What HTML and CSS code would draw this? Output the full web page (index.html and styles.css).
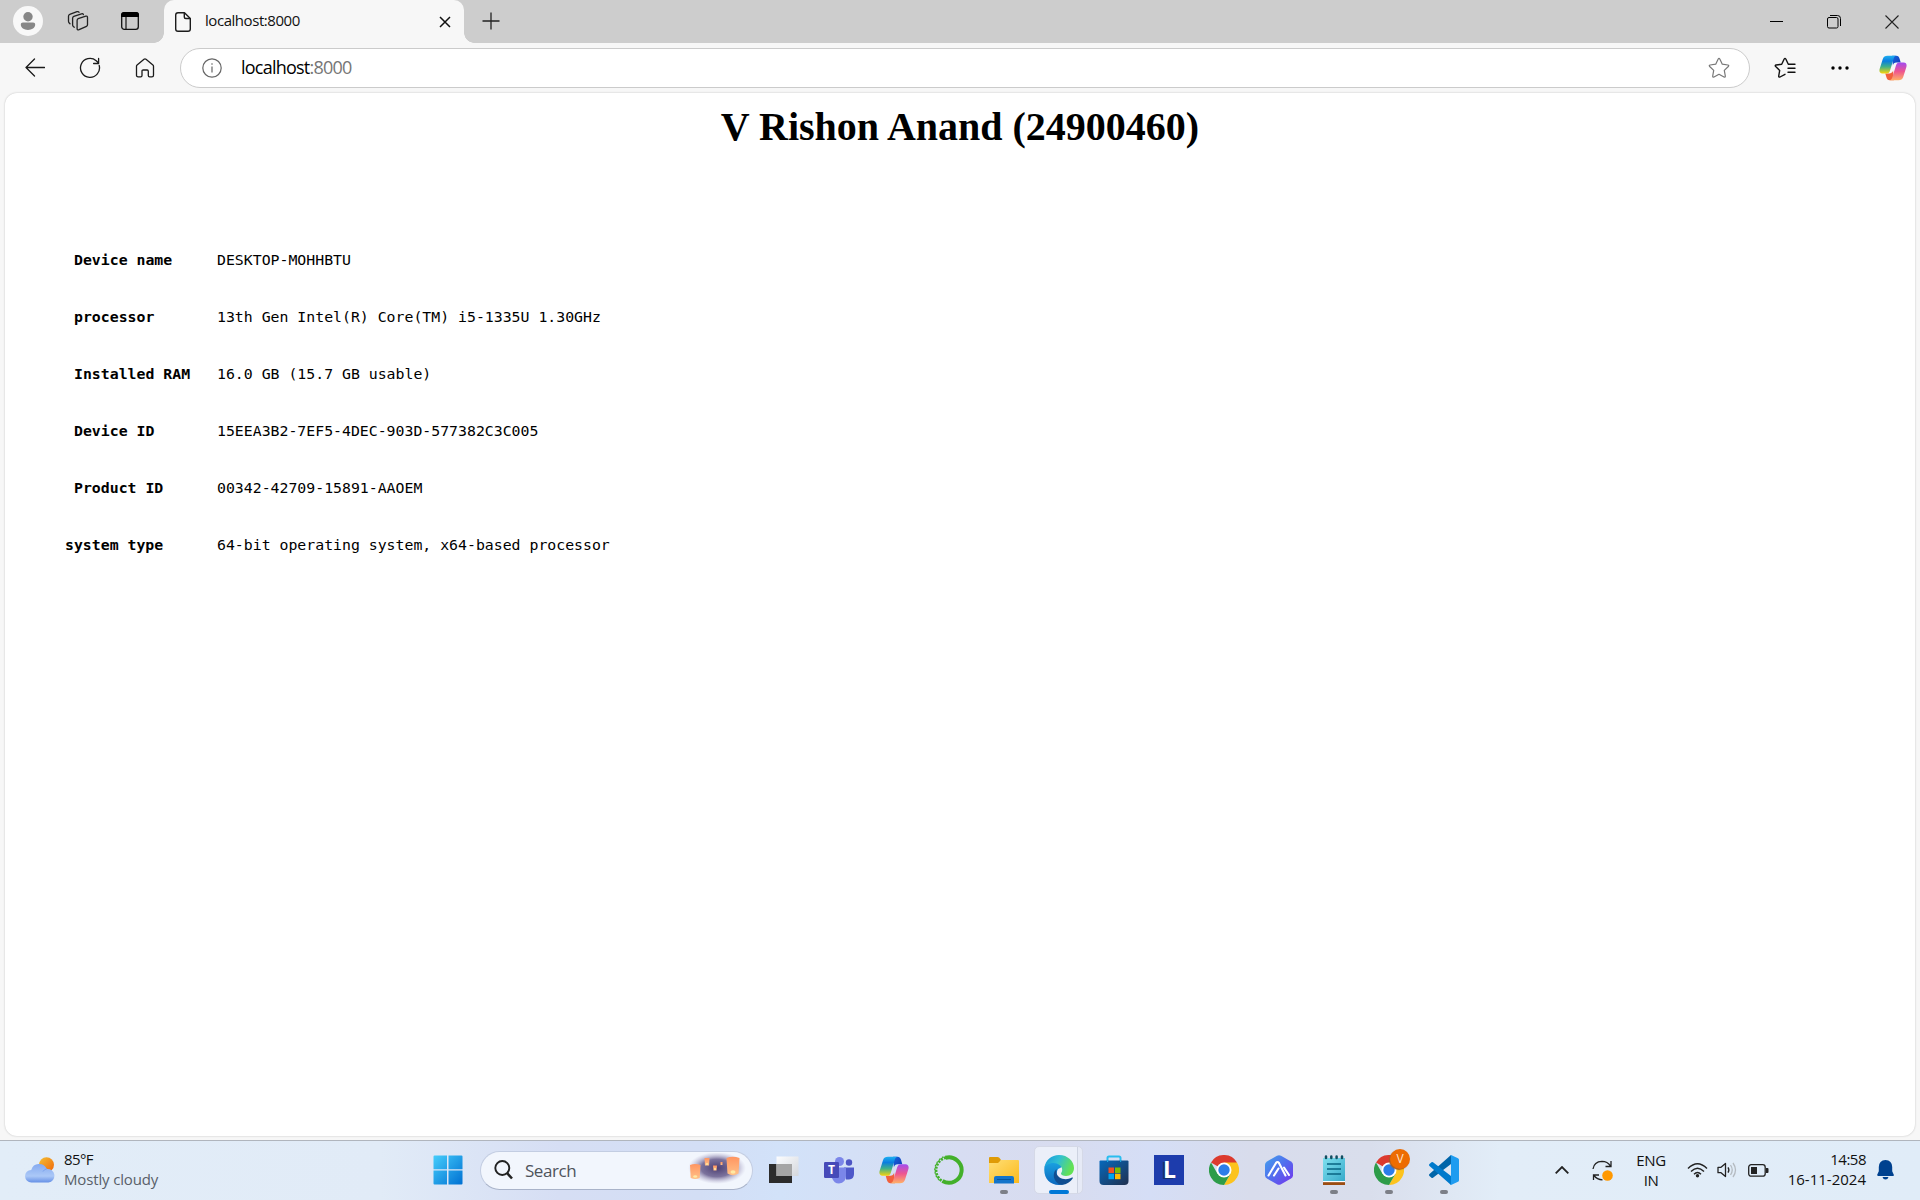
FILE: index.html
```html
<!DOCTYPE html>
<html lang="en">
<head>
<meta charset="utf-8">
<title>localhost:8000</title>
<link rel="stylesheet" href="styles.css">
</head>
<body>
<svg class="defs" width="0" height="0">
  <defs>
    <linearGradient id="cpBlue" x1="0" y1="0" x2="0" y2="1"><stop offset="0" stop-color="#1fb0f0"/><stop offset=".3" stop-color="#0a7de0"/><stop offset=".62" stop-color="#3fb08a"/><stop offset="1" stop-color="#f8d40a"/></linearGradient>
    <linearGradient id="cpPink" x1="0" y1="0" x2="0" y2="1"><stop offset="0" stop-color="#a24bf0"/><stop offset=".5" stop-color="#ee5590"/><stop offset="1" stop-color="#ffb066"/></linearGradient>
    <linearGradient id="cpNavy" x1="0" y1="0" x2="1" y2="1"><stop offset="0" stop-color="#1667dd"/><stop offset="1" stop-color="#1238b8"/></linearGradient>
    <linearGradient id="win" x1="0" y1="0" x2="1" y2="1"><stop offset="0" stop-color="#45cdfb"/><stop offset="1" stop-color="#0070d2"/></linearGradient>
    <linearGradient id="cloud" x1="0" y1="0" x2="0" y2="1"><stop offset="0" stop-color="#85aaf0"/><stop offset=".65" stop-color="#abc8f7"/><stop offset="1" stop-color="#6590e6"/></linearGradient>
    <linearGradient id="sun" x1="0" y1="0" x2="1" y2="1"><stop offset="0" stop-color="#f4c031"/><stop offset="1" stop-color="#f0650b"/></linearGradient>
    <linearGradient id="folder" x1="0" y1="0" x2="1" y2="1"><stop offset="0" stop-color="#ffdf76"/><stop offset="1" stop-color="#fbb91c"/></linearGradient>
    <linearGradient id="edgeTop" x1="0" y1="0" x2="1" y2=".35"><stop offset="0" stop-color="#1595dd"/><stop offset=".5" stop-color="#30bfd3"/><stop offset="1" stop-color="#63e155"/></linearGradient>
    <linearGradient id="edgeLow" x1="0" y1="0" x2="0" y2="1"><stop offset="0" stop-color="#1ba4e3"/><stop offset="1" stop-color="#0b67bd"/></linearGradient>
    <linearGradient id="store" x1="0" y1="0" x2="1" y2="1"><stop offset="0" stop-color="#0669bc"/><stop offset="1" stop-color="#20304f"/></linearGradient>
    <linearGradient id="hexa" x1="0" y1="0" x2="1" y2="1"><stop offset="0" stop-color="#43a3ec"/><stop offset=".5" stop-color="#526cee"/><stop offset="1" stop-color="#7732ed"/></linearGradient>
    <linearGradient id="note" x1="0" y1="0" x2="1" y2="1"><stop offset="0" stop-color="#7fe0ef"/><stop offset="1" stop-color="#37aaca"/></linearGradient>
    <linearGradient id="lamp" x1="0" y1="0" x2="0" y2="1"><stop offset="0" stop-color="#ff9561"/><stop offset="1" stop-color="#ffc188"/></linearGradient>
    <linearGradient id="pane" x1="0" y1="0" x2="1" y2="1"><stop offset="0" stop-color="#fff"/><stop offset="1" stop-color="#d4d6da"/></linearGradient>
    <radialGradient id="night"><stop offset="0" stop-color="#4c3f72"/><stop offset=".55" stop-color="#6e6492" stop-opacity=".9"/><stop offset="1" stop-color="#b7b2d2" stop-opacity="0"/></radialGradient>
    <symbol id="copilot" viewBox="0 0 30 28">
      <path fill="url(#cpNavy)" d="M14 .8h4.500c2.100 0 3 1.400 3.600 3.300l1.200 4.100h-4.800c-2 0-3 1.100-3.600 3z"/>
      <path fill="#f1603c" d="M16 27.200h-4.500c-2.100 0-3-1.400-3.600-3.300l-1.200-4.100h4.800c2 0 3-1.100 3.600-3z"/>
      <path fill="url(#cpBlue)" d="M9 .8h9.700c-2 .2-2.600 1.800-3.100 3.400l-3.700 12.200c-.7 2.300-1.700 3.400-4 3.400H3.500C.8 19.800-.1 17.600.6 15L4 4.200C4.800 1.700 6.500.8 9 .8z"/>
      <path fill="url(#cpPink)" d="M21 27.200h-9.700c2-.2 2.600-1.800 3.100-3.400l3.700-12.200c.7-2.300 1.700-3.400 4-3.400h4.400c2.700 0 3.600 2.200 2.900 4.800L26 23.800c-.8 2.500-2.500 3.400-5 3.400z"/>
    </symbol>
    <symbol id="chrome" viewBox="0 0 30 30">
      <path fill="#dc3a2e" d="M15 15L2 7.500A15 15 0 0 1 28 7.500z"/>
      <path fill="#fcc31e" d="M15 7.500h13A15 15 0 0 1 15 30l6.500-11.300z"/>
      <path fill="#2d9c49" d="M2 7.500A15 15 0 0 0 15 30l6.500-11.200-13 0z"/>
      <circle cx="15" cy="15" r="7.500" fill="#fff"/><circle cx="15" cy="15" r="5.700" fill="#2b7de9"/>
    </symbol>
  </defs>
</svg>

<header class="tabstrip">
  <div class="tab-tools">
    <svg class="avatar" width="30" height="30" viewBox="0 0 30 30"><circle cx="15" cy="15" r="15" fill="#f8f8f8"/><circle cx="15" cy="10.800" r="4.700" fill="#878787"/><path fill="#878787" d="M10 16.500h10c1.500 0 2.200.8 2.200 2.100 0 3.400-3.300 5.400-7.200 5.400s-7.200-2-7.200-5.400c0-1.300.7-2.100 2.200-2.100z"/></svg>
    <svg class="workspaces" width="22" height="22" viewBox="0 0 22 22" fill="none" stroke="#222" stroke-width="1.300" stroke-linejoin="round" stroke-linecap="round"><path d="M11.200 8.600l7.600-2.400q1.700-.4 1.700 1.300v7.300q0 1.100-1 1.500l-7.400 3.400q-2 .7-2-1.300v-8q0-1.400 1.100-1.800z"/><path d="M7.300 17.200l-1-.8q-.7-.5-.7-1.600V8.300q0-1.400 1.200-1.900l7.700-2.600q1.500-.4 1.900.8"/><path d="M3 13.700l-1-1Q1.500 12.200 1.500 11V6.200q0-1.400 1.200-1.800L10 1.700q1.500-.5 2 .6"/></svg>
    <svg class="vertical-tabs" width="20" height="20" viewBox="0 0 20 20"><rect x="1.700" y="1.700" width="16.600" height="16.600" rx="2.600" fill="none" stroke="#111" stroke-width="1.300"/><path d="M1 6V4q0-3 3-3h12q3 0 3 3v2z" fill="#000"/><path d="M6 6v12" stroke="#111" stroke-width="1.200"/></svg>
  </div>
  <div class="tab">
    <svg width="16" height="20" viewBox="0 0 16 20" fill="none" stroke="#1b1b1b" stroke-width="1.400" stroke-linejoin="round"><path d="M3 .7h6.500l5.800 5.700V17q0 2.300-2.300 2.300H3Q.7 19.300.7 17V3Q.7.700 3 .7z"/><path d="M9.300 1v4q0 1.500 1.500 1.500h4.300"/></svg>
    <span class="tab-title">localhost:8000</span>
    <svg class="tab-close" width="12" height="12" viewBox="0 0 12 12" stroke="#111" stroke-width="1.500"><path d="M1 1l10 10M11 1L1 11"/></svg>
  </div>
  <svg class="new-tab" width="18" height="18" viewBox="0 0 18 18" stroke="#222" stroke-width="1.300"><path d="M9 .5v17M.5 9h17"/></svg>
  <div class="window-buttons">
    <svg width="13" height="13" viewBox="0 0 13 13"><path d="M0 6.500h13" stroke="#000"/></svg>
    <svg width="14" height="14" viewBox="0 0 14 14" fill="none" stroke="#000"><rect x=".5" y="2.500" width="10.500" height="10.500" rx="1.500"/><path d="M3 .5h7.500q3 0 3 3V11"/></svg>
    <svg width="14" height="14" viewBox="0 0 14 14" stroke="#222" stroke-width="1.100"><path d="M.5.500l13 13M13.500.500l-13 13"/></svg>
  </div>
</header>

<nav class="toolbar">
  <svg width="20" height="20" viewBox="0 0 20 20" fill="none" stroke="#1b1b1b" stroke-width="1.300" stroke-linecap="round" stroke-linejoin="round"><path d="M19.500 9.500H1M9.500 1L1 9.500 9.500 18"/></svg>
  <svg class="reload" width="22" height="22" viewBox="0 0 22 22" fill="none" stroke="#1b1b1b" stroke-width="1.300" stroke-linecap="round" stroke-linejoin="round"><path d="M20.200 8.500a9.500 9.500 0 1 1-3-4.800L19.600 6M19.600 1.500V6.500h-5"/></svg>
  <svg class="home" width="20" height="20" viewBox="0 0 20 20" fill="none" stroke="#1b1b1b" stroke-width="1.300" stroke-linejoin="round"><path d="M1.500 8.200q0-.8.600-1.300L9 1.200q1-.8 2 0L17.900 6.900q.6.500.6 1.300v9q0 1.600-1.600 1.600h-2.300q-1.300 0-1.300-1.300v-4.300q0-1.200-1.200-1.200H8.200Q7 12 7 13.200v4.300q0 1.300-1.300 1.300H3.100q-1.600 0-1.600-1.600z"/></svg>
  <div class="address">
    <svg width="20" height="20" viewBox="0 0 20 20" fill="none" stroke="#666" stroke-width="1.200"><circle cx="10" cy="10" r="9.200"/><path d="M10 8.500v6M10 5.200v1.600"/></svg>
    <span class="url">localhost<span class="port">:8000</span></span>
    <svg class="star" width="22" height="22" viewBox="0 0 22 22" fill="none" stroke="#777" stroke-width="1.200" stroke-linejoin="round"><path d="M10.200 2q.8-1.300 1.600 0l2.500 5.200 5.500.8q1.600.3.500 1.500l-4 3.900 1 5.600q.1 1.500-1.300 1L11 17.300 6 20q-1.400.5-1.300-1l1-5.600-4-3.900Q.6 8.300 2.200 8l5.500-.8z"/></svg>
  </div>
  <svg class="favorites" width="22" height="22" viewBox="0 0 22 22" fill="none" stroke="#111" stroke-width="1.400" stroke-linejoin="round" stroke-linecap="round"><path d="M11 17.300L6 20q-1.400.5-1.300-1l1-5.600-4-3.900Q.6 8.300 2.200 8l5.500-.8L10.200 2q.8-1.300 1.600 0l2.500 5.200M15 7.300h6M14 11.300h7M14 15.300h7"/></svg>
  <svg class="more" width="18" height="4" viewBox="0 0 18 4"><circle cx="2" cy="2" r="1.700"/><circle cx="9" cy="2" r="1.700"/><circle cx="16" cy="2" r="1.700"/></svg>
  <svg class="sidebar-copilot" width="28" height="26"><use href="#copilot"/></svg>
</nav>

<main class="page">
  <h1>V Rishon Anand (24900460)</h1>
  <dl class="specs">
    <dt>Device name</dt><dd>DESKTOP-MOHHBTU</dd>
    <dt>processor</dt><dd>13th Gen Intel(R) Core(TM) i5-1335U 1.30GHz</dd>
    <dt>Installed RAM</dt><dd>16.0 GB (15.7 GB usable)</dd>
    <dt>Device ID</dt><dd>15EEA3B2-7EF5-4DEC-903D-577382C3C005</dd>
    <dt>Product ID</dt><dd>00342-42709-15891-AAOEM</dd>
    <dt class="flush">system type</dt><dd>64-bit operating system, x64-based processor</dd>
  </dl>
</main>

<footer class="taskbar">
  <div class="weather">
    <svg width="31" height="26" viewBox="0 0 31 26"><circle cx="21.500" cy="7.700" r="7.500" fill="url(#sun)"/><path fill="url(#cloud)" d="M6.500 25.500a6.300 6.300 0 0 1-.3-12.600A8.300 8.300 0 0 1 21.700 12a6.800 6.800 0 1 1 1.800 13.500z"/><path d="M18 14.500q1.500-2.500 4-2.800" stroke="#7ba1e9" fill="none"/></svg>
    <div class="weather-text"><span>85°F</span><span class="muted cloudy">Mostly cloudy</span></div>
  </div>
  <svg class="start" width="30" height="30" viewBox="0 0 30 30"><path fill="url(#win)" d="M1.500.500H14V14.200H.5V1.500q0-1 1-1zM15.500.500h13q1 0 1 1V14.200h-14zM.5 15.500H14v14H1.500q-1 0-1-1zM15.500 15.500h14v13q0 1-1 1h-13z"/></svg>
  <div class="search">
    <svg width="19" height="20" viewBox="0 0 19 20" fill="none" stroke="#222" stroke-width="1.900"><circle cx="8.300" cy="8" r="7"/><path d="M13 13l5 5.500" stroke-width="2.600"/></svg>
    <span>Search</span>
    <svg class="lanterns" width="58" height="32" viewBox="0 0 58 32"><ellipse cx="29" cy="15" rx="29" ry="16" fill="url(#night)"/><g fill="url(#lamp)"><path d="M2 12q5-2 10.500 0l-.8 13q-4.500 2-9 0z"/><path d="M16.500 5h5l-.5 7.500h-4z"/><path d="M25 12.500h4l-.5 5h-3z"/><path d="M32.500 9h2v3h-2z"/><path d="M38.500 5q6-2.500 13 0l-1 15.500q-5.500 3.500-11 0z"/></g><g fill="#ffe9a3"><ellipse cx="7.200" cy="23.500" rx="2" ry="1.300"/><ellipse cx="45" cy="19" rx="2.500" ry="1.700"/><circle cx="19" cy="11" r="1"/><circle cx="27" cy="16" r="1"/></g></svg>
  </div>
  <div class="apps">
    <div class="app"><svg width="30" height="30" viewBox="0 0 30 30"><path d="M0 9h23v19H0z" fill="#2c2c2c"/><path d="M7.500 1.500h22V21h-22z" fill="url(#pane)" opacity=".93"/><path d="M7.500 9H23v12H7.500z" fill="#a5a5a5"/></svg></div>
    <div class="app"><svg width="30" height="30" viewBox="0 0 30 30"><circle cx="25" cy="7.500" r="3.200" fill="#4e55c4"/><path d="M20 12.500h10V19q0 5-5 5.500h-3z" fill="#4e58c9"/><circle cx="15.500" cy="6.500" r="4.500" fill="#7b86e9"/><path d="M8 12.500h14V20q0 8-7 8.500-5 0-7-5.500z" fill="#7b86e9"/><rect y="7" width="15" height="16" rx="1.200" fill="#464ab9"/><text class="teams-letter" x="7.500" y="19.200" text-anchor="middle" fill="#fff">T</text></svg></div>
    <div class="app"><svg width="30" height="28"><use href="#copilot"/></svg></div>
    <div class="app"><svg width="30" height="30" viewBox="0 0 30 30" fill="none" stroke="#43b02a"><path d="M8.500 26a12.700 12.700 0 1 0 3-23.200" stroke-width="4"/><path d="M12 2.600A12.800 12.800 0 0 0 9 26.500" stroke-width="2.800" stroke-dasharray="2.200 1.200"/><path d="M9.500 2A14 14 0 0 0 7 26.500" stroke-width="1.400" stroke-dasharray="1.500 2.200"/></svg></div>
    <div class="app running"><svg width="30" height="30" viewBox="0 0 30 30"><path d="M0 3q0-1 1-1h7.500q1 0 1.800.8L12 5l-2 4H0z" fill="#df9b06"/><path d="M0 8h9l3-3h17q1 0 1 1v22H0z" fill="url(#folder)"/><path d="M5 28.500v-5.500q0-2 2-2h16q2 0 2 2v5.500z" fill="#1474ca"/><path d="M8 24.500h14" stroke="#07559e"/></svg></div>
    <div class="app active"><svg width="30" height="30" viewBox="0 0 30 30"><path fill="url(#edgeLow)" d="M.5 12Q3 5 10 6.500q7 1 8 5.500l-4 2q-4 7 4 11.500 4 2 8-.5-4 5-11 5C5 30-1 22 .5 12z"/><path fill="url(#edgeTop)" d="M.3 13C1.500 5 7.500 0 15 0c9 0 15 6.500 15 13 0 5-3.500 8-8 8-3 0-5-1.200-5-2.300 0-1 1.200-1.500 1.200-4C18.200 11 14 8 9.500 8 5 8 1.500 10.500.3 13z"/><path fill="#104e91" d="M12.500 14c-6 6-1 15 5 15.800 5 .2 9-3 11.300-6.500.4-.7-.2-1-.8-.7-7 3.700-14.500.4-15.500-4.600-.2-1.700 0-3 0-4z"/></svg></div>
    <div class="app"><svg width="30" height="30" viewBox="0 0 30 30"><path d="M8.500 7V3q0-1.500 1.500-1.500h10q1.500 0 1.500 1.500v4" fill="none" stroke="#29bdef" stroke-width="2"/><path d="M1.500 5.500h27q1 0 1 1V26q0 4-4 4h-21q-4 0-4-4V6.500q0-1 1-1z" fill="url(#store)"/><path d="M8 5.500h1.200v1.300H8zM21 5.500h1.200v1.300H21z" fill="#29bdef"/><path fill="#f25022" d="M9.500 12.500H15V18H9.500z"/><path fill="#7fba00" d="M16 12.500h5.500V18H16z"/><path fill="#00a4ef" d="M9.500 18.700H15v5.500H9.500z"/><path fill="#ffb900" d="M16 18.700h5.500v5.500H16z"/></svg></div>
    <div class="app"><div class="letter-app"><span>L</span></div></div>
    <div class="app"><svg width="30" height="30"><use href="#chrome"/></svg></div>
    <div class="app"><svg width="30" height="30" viewBox="0 0 30 30"><path fill="url(#hexa)" d="M13 .8q2-1.100 4 0l10 5.600q2 1.200 2 3.300v10.600q0 2.100-2 3.300l-10 5.600q-2 1.100-4 0L3 23.600q-2-1.200-2-3.300V9.700Q1 7.600 3 6.400z"/><path d="M4.500 20.500L12 8q1.500-2 3 0l6.500 12.500M10 20.500l4.500-7M20 12.500l5 7.500" fill="none" stroke="#fff" stroke-width="2.100" stroke-linecap="round"/></svg></div>
    <div class="app running"><svg width="30" height="30" viewBox="0 0 30 30"><path d="M4 3h22v23H4z" fill="url(#note)"/><path d="M4 26h22v1H4z" fill="#fff"/><path d="M4 27.200h22V30H4z" fill="#9c4d12"/><path d="M8 9h14M8 14h14M8 19h14" stroke="#086483" stroke-width="1.700"/><path d="M7 1.500v1.500M12.300 1.500v1.500M17.600 1.500v1.500M23 1.500v1.500" stroke="#124f61" stroke-width="2.500" stroke-linecap="round"/></svg></div>
    <div class="app running"><svg width="30" height="30"><use href="#chrome"/></svg><span class="profile-badge">V</span></div>
    <div class="app running"><svg width="30" height="30" viewBox="0 0 30 30"><path fill="#0065a9" d="M22 0v9L4 22.700q-.8.600-1.500 0L.5 21q-1-.9 0-1.900z"/><path fill="#007acc" d="M22 30v-9L4 7.300q-.8-.6-1.500 0L.5 9q-1 .9 0 1.900z"/><path fill="#1f9cf0" d="M22 0l7 3.300q1 .5 1 1.500v20.400q0 1-1 1.500L22 30q-1-.2 0-1.800V1.800Q21 .2 22 0z"/></svg></div>
  </div>
  <div class="tray">
    <svg class="chevron" width="14" height="8" viewBox="0 0 14 8" fill="none" stroke="#222" stroke-width="1.800"><path d="M.7 7.300L7 1l6.300 6.300"/></svg>
    <svg class="sync" width="21" height="21" viewBox="0 0 21 21" fill="none" stroke="#222" stroke-width="1.300"><path d="M1 9Q2 1.500 10 1.300q5.500 0 8.500 4.700M19 1v5.500h-5.500M1.500 20v-5H7M2 15.500q3 4 8.500 4.300"/><circle cx="15.500" cy="15.500" r="5.300" fill="#ff9800" stroke="none"/></svg>
    <div class="language"><span>ENG</span><span>IN</span></div>
    <svg class="wifi" width="21" height="16" viewBox="0 0 21 16" fill="none" stroke="#222" stroke-width="1.400"><path d="M1 6.500q9.500-9.500 19 0M4 9.500q6.500-6.500 13 0M7 12.300q3.500-3.500 7 0"/><circle cx="10.500" cy="13.700" r="1.700" fill="#222" stroke="none"/></svg>
    <svg class="volume" width="21" height="16" viewBox="0 0 21 16" fill="none" stroke="#222" stroke-width="1.300" stroke-linejoin="round"><path d="M1 5.300h3L8.500 1.500v13L4 10.700H1z"/><path d="M11 5.300q1.800 2.700 0 5.400"/><path d="M13.500 3q3.500 5 0 10M16 1q5 7 0 14" stroke="#b4bac0"/></svg>
    <svg class="battery" width="21" height="13" viewBox="0 0 21 13"><rect x=".7" y=".7" width="16.500" height="11.500" rx="2.500" fill="none" stroke="#222" stroke-width="1.300"/><path d="M3 3h6v7H3z" fill="#222"/><path d="M18 4h1.500q1 0 1 1v3q0 1-1 1H18z" fill="#222"/></svg>
    <div class="clock"><span class="time">14:58</span><span>16-11-2024</span></div>
    <svg class="bell" width="17" height="20" viewBox="0 0 17 20" fill="#00418f"><path d="M8.500 0q6.500.3 6.700 7v4.300l1.600 3.500q.3 1-.7 1.200H1q-1-.2-.8-1.200l1.600-3.500V7Q2 .3 8.500 0zM5.500 17h6q-.7 2.500-3 2.500t-3-2.500z"/></svg>
  </div>
</footer>
</body>
</html>
```
FILE: styles.css
```css
* { box-sizing: border-box; }
svg { display: block; flex: none; }
.defs { position: absolute; }

body {
  margin: 0;
  height: 1200px;
  display: flex;
  flex-direction: column;
  overflow: hidden;
  background: #f7f7f7;
  color: #111;
  font-family: "Open Sans", "Noto Sans", sans-serif;
}

/* Tab strip */
.tabstrip {
  height: 43px;
  flex: none;
  display: flex;
  align-items: center;
  background: #cdcdcd;
}
.tab-tools { width: 164px; display: flex; align-items: center; padding: 0 0 1px 13px; }
.workspaces { margin-left: 24px; }
.vertical-tabs { margin-left: 31px; }
.tab {
  position: relative;
  width: 300px;
  height: 43px;
  display: flex;
  align-items: center;
  padding: 0 13px 0 11px;
  border-radius: 10px 10px 0 0;
  background: #f7f7f7;
}
.tab::before, .tab::after {
  content: "";
  position: absolute;
  bottom: 0;
  width: 10px;
  height: 10px;
}
.tab::before { left: -10px; background: radial-gradient(circle at 0 0, #cdcdcd 9.5px, #f7f7f7 10px); }
.tab::after { right: -10px; background: radial-gradient(circle at 100% 0, #cdcdcd 9.5px, #f7f7f7 10px); }
.tab-title { margin-left: 14px; font-size: 15px; line-height: 20px; letter-spacing: -0.45px; padding-bottom: 3px; }
.tab-close { margin-left: auto; }
.new-tab { margin: 0 0 2px 18px; }
.window-buttons { margin-left: auto; display: flex; gap: 44px; padding-right: 21px; }

/* Navigation bar */
.toolbar {
  height: 50px;
  flex: none;
  display: flex;
  align-items: center;
  padding: 0 13px 1px 25px;
}
.reload { margin-left: 34px; }
.home { margin-left: 34px; }
.address {
  width: 1570px;
  height: 40px;
  margin: 1px 0 0 25px;
  display: flex;
  align-items: center;
  padding: 0 19px 0 21px;
  border: 1px solid #cbcbcb;
  border-radius: 20px;
  background: #fff;
}
.url { margin-left: 19px; font-size: 18px; line-height: 24px; letter-spacing: -0.77px; padding-bottom: 2px; color: #000; }
.port { color: #767676; }
.star { margin-left: auto; }
.favorites { margin-left: 24px; }
.more { margin-left: 35px; }
.sidebar-copilot { margin-left: auto; }

/* Web page */
.page {
  flex: 1;
  margin: 0 5px 4px;
  padding: 0 8px;
  border-radius: 12px;
  background: #fff;
  box-shadow: 0 0 2px #bbb;
  color: #000;
}
h1 {
  margin: 0;
  padding-top: 11px;
  font: bold 40px/46px "Liberation Serif", serif;
  text-align: center;
}
.specs {
  display: grid;
  grid-template-columns: 152px auto;
  row-gap: 38px;
  margin: 100px 0 0 52px;
  font: 14.84px/19px "DejaVu Sans Mono", monospace;
}
.specs dt { padding-left: 9px; font-weight: bold; }
.specs .flush { padding-left: 0; }
.specs dd { margin: 0; }

/* Taskbar */
.taskbar {
  height: 60px;
  flex: none;
  display: flex;
  align-items: center;
  padding-bottom: 1px;
  border-top: 1px solid #b0b5bd;
  background: linear-gradient(90deg, #e2edf8 0, #e1ebf7 380px, #d6def4 560px, #d3def5 700px, #d2e2f9 780px, #d7ddf2 960px, #d8dcef 1060px, #d5def6 1150px, #d8dcec 1250px, #d9deec 1370px, #e2edf8 1500px, #e0ecf8 100%);
}
.weather { width: 433px; display: flex; align-items: center; padding-left: 25px; }
.weather-text { display: flex; flex-direction: column; margin: -2px 0 0 8px; font-size: 15px; line-height: 20px; letter-spacing: -0.6px; }
.muted { color: #596069; }
.cloudy { letter-spacing: -0.15px; }
.search {
  width: 273px;
  height: 39px;
  margin-left: 17px;
  display: flex;
  align-items: center;
  padding: 0 6px 0 13px;
  border: 1px solid #c3cde2;
  border-bottom-color: #a9b3c9;
  border-radius: 20px;
  background: #f2f6fd;
  font-size: 17px;
  letter-spacing: -0.45px;
  color: #4e535b;
}
.search span { margin-left: 12px; }
.lanterns { margin: 0 0 3px auto; }
.apps { display: flex; margin-left: 7px; }
.app {
  position: relative;
  width: 47px;
  height: 48px;
  margin-right: 8px;
  display: flex;
  align-items: center;
  justify-content: center;
}
.running::after, .active::after {
  content: "";
  position: absolute;
  bottom: 0;
  left: 20px;
  width: 8px;
  height: 4px;
  border-radius: 2px;
  background: #7c7f87;
}
.active::before {
  content: "";
  position: absolute;
  inset: 0 -1px 0 -1px;
  border: 1px solid #d5d9e7;
  border-radius: 5px;
  background: linear-gradient(90deg, #ebeff9 42px, #cdd3e1 42px 43px, #e6eaf6 43px);
}
.active svg { position: relative; }
.active::after { left: 14px; width: 20px; background: #0078d7; }
.teams-letter { font: bold 12px "Open Sans", sans-serif; }
.letter-app { width: 30px; height: 30px; background: #1d3cac; color: #fff; font: bold 23px/29px "Open Sans", sans-serif; text-align: center; text-shadow: -2px 1px #15306d; padding-left: 2px; }
.profile-badge {
  position: absolute;
  left: 25px;
  top: 3px;
  width: 20px;
  height: 20px;
  border-radius: 50%;
  background: #ed6c02;
  box-shadow: -1px 1px 1px #a85b22;
  color: #ffe4cc;
  font-size: 12px;
  line-height: 20px;
  text-align: center;
}
.tray { margin-left: auto; display: flex; align-items: center; padding-right: 26px; font-size: 15px; line-height: 20px; letter-spacing: -0.6px; }
.sync { margin-left: 23px; }
.language { width: 44px; margin-left: 16px; display: flex; flex-direction: column; align-items: center; line-height: 20px; }
.language span:first-child { letter-spacing: -0.4px; }
.wifi { margin-left: 14px; }
.volume { margin-left: 9px; }
.battery { margin-left: 10px; }
.clock { width: 97px; margin-top: -2px; display: flex; flex-direction: column; align-items: flex-end; letter-spacing: 0; }
.time { letter-spacing: -0.5px; }
.bell { margin-left: 11px; }
```
